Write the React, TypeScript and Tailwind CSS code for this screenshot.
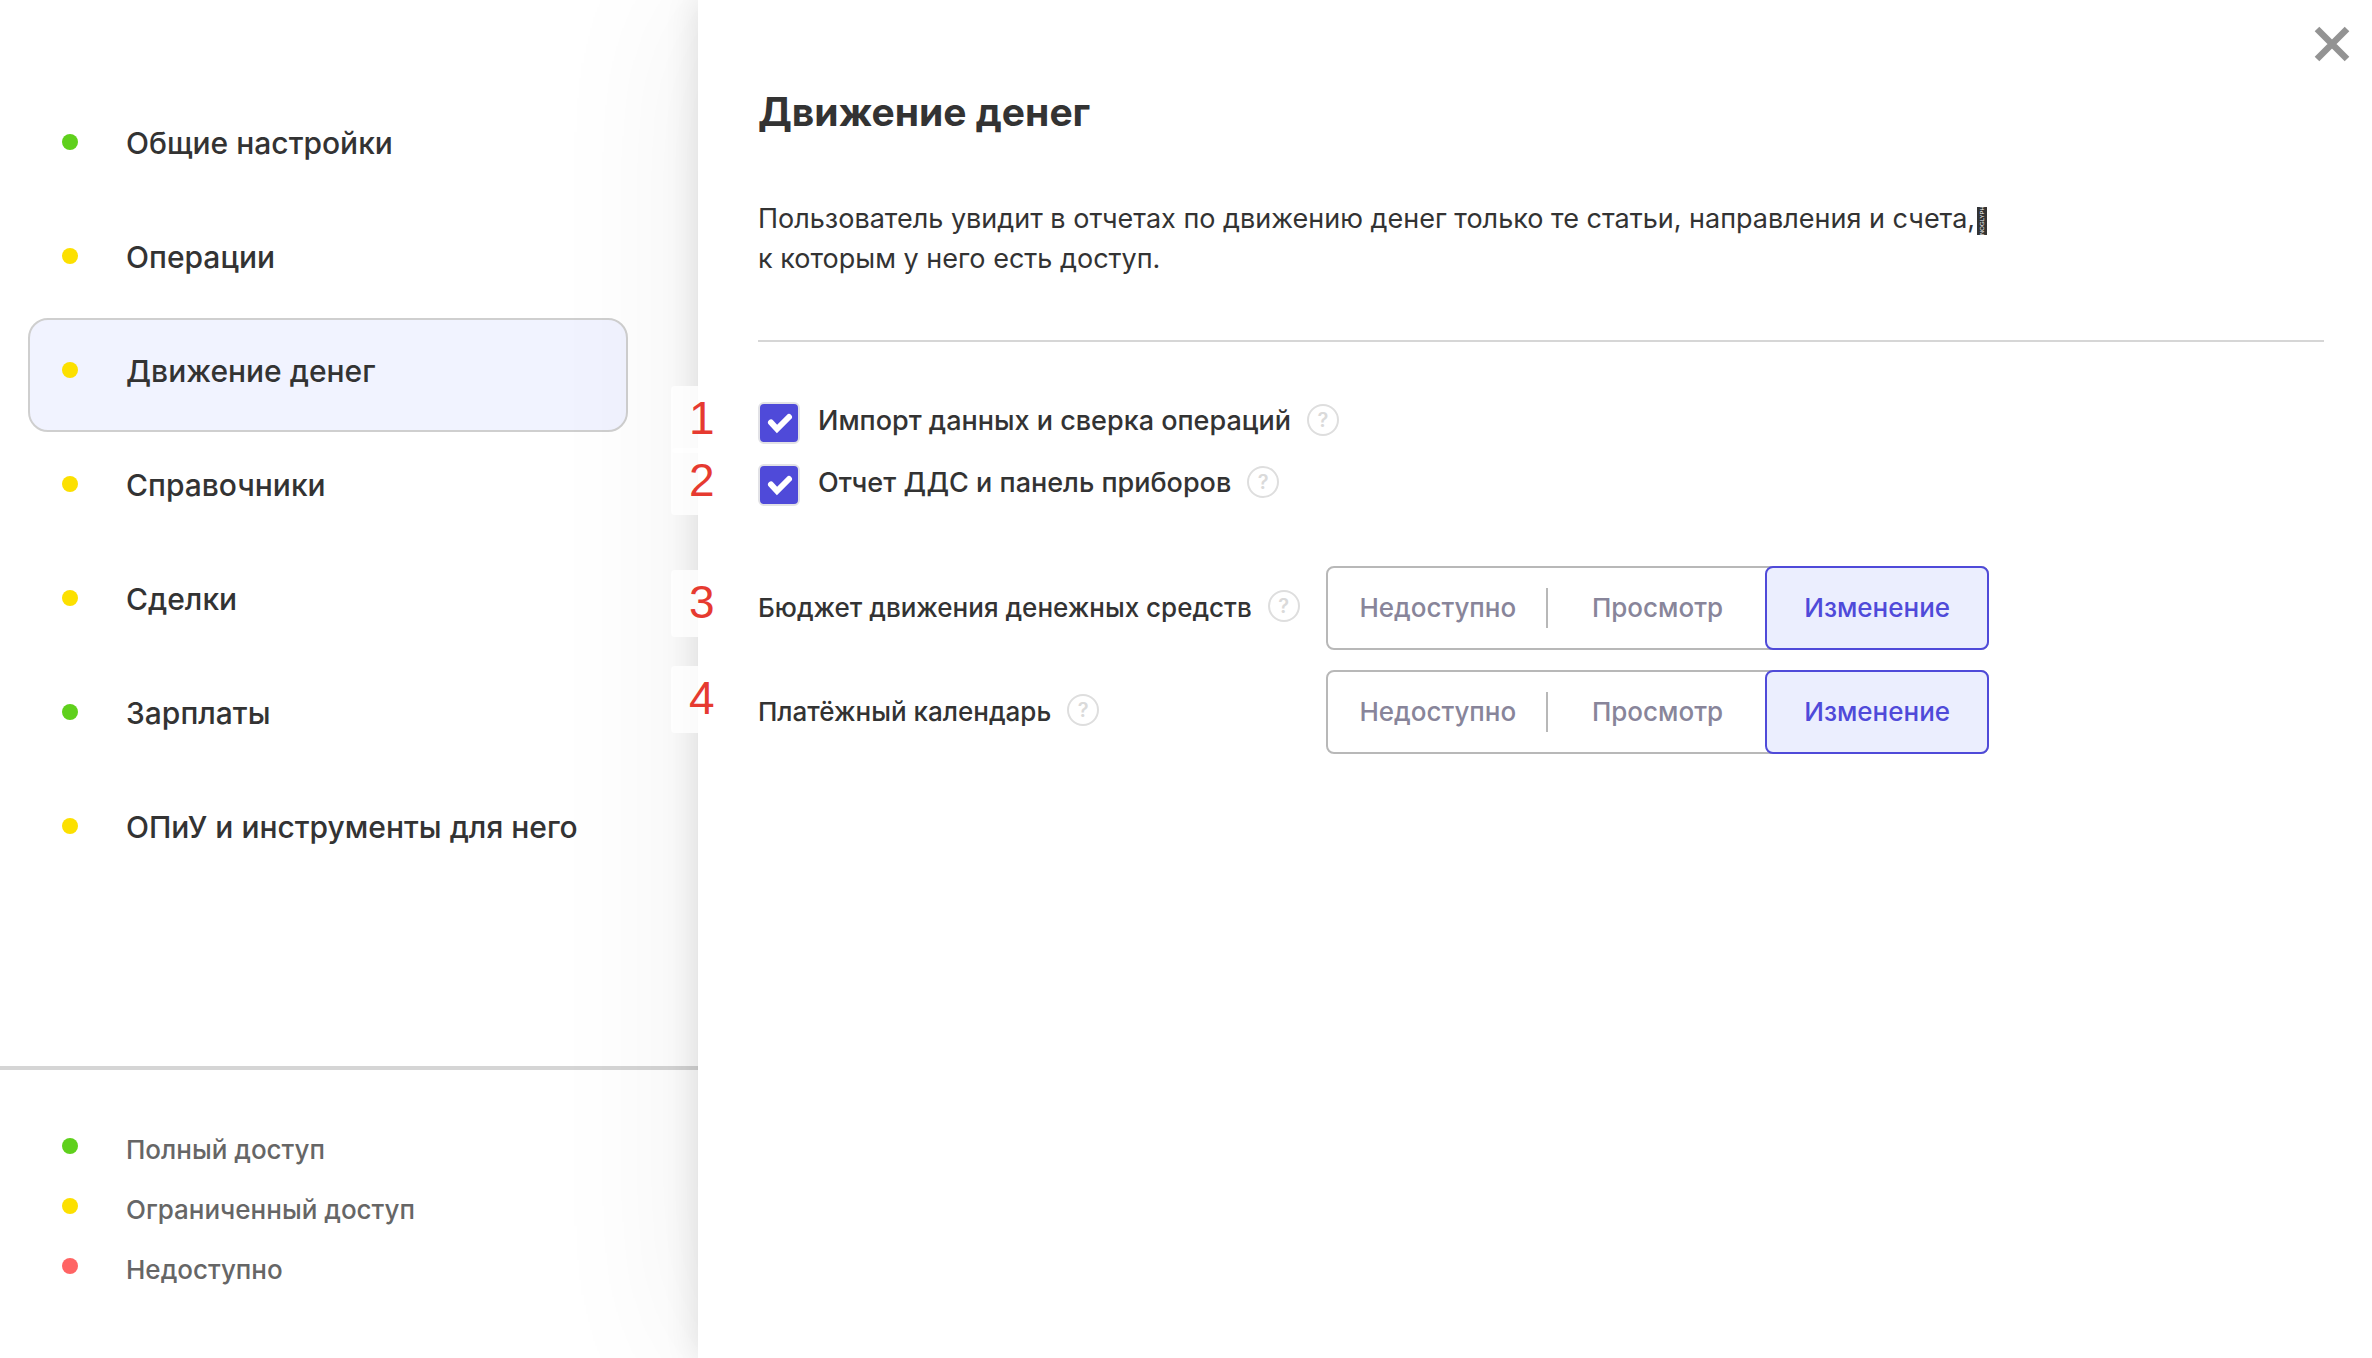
import { useState } from 'react'

type Access = 'full' | 'limited' | 'none'

const DOT: Record<Access, string> = {
  full: 'bg-[#5fd01c]',
  limited: 'bg-[#fce000]',
  none: 'bg-[#ff6464]',
}

const SECTIONS: { title: string; access: Access }[] = [
  { title: 'Общие настройки', access: 'full' },
  { title: 'Операции', access: 'limited' },
  { title: 'Движение денег', access: 'limited' },
  { title: 'Справочники', access: 'limited' },
  { title: 'Сделки', access: 'limited' },
  { title: 'Зарплаты', access: 'full' },
  { title: 'ОПиУ и инструменты для него', access: 'limited' },
]

const LEGEND: { title: string; access: Access }[] = [
  { title: 'Полный доступ', access: 'full' },
  { title: 'Ограниченный доступ', access: 'limited' },
  { title: 'Недоступно', access: 'none' },
]

const LEVELS = ['Недоступно', 'Просмотр', 'Изменение']

function Dot({ access }: { access: Access }) {
  return <span className={`size-4 shrink-0 rounded-full ${DOT[access]}`} />
}

function Help() {
  return (
    <button
      type="button"
      className="flex size-8 shrink-0 items-center justify-center rounded-full border-2 border-[#dedede] text-xl leading-none font-semibold text-[#dadada]"
    >
      ?
    </button>
  )
}

function Marker({ n, top }: { n: number; top: string }) {
  return (
    <span
      className={`absolute -left-[87px] flex h-[67px] w-14 items-center rounded-sm bg-white/80 pb-1 pl-[18px] font-['Liberation_Sans'] text-[46px] leading-none font-normal text-[#e63a30] ${top}`}
    >
      {n}
    </span>
  )
}

interface CheckRowProps { id: string; n: number; top: string; label: string }

function CheckRow({ id, n, top, label }: CheckRowProps) {
  const [checked, setChecked] = useState(true)

  return (
    <div className="relative flex h-[42px] items-center">
      <Marker n={n} top={top} />
      <span className="relative size-[42px] shrink-0">
        <input
          id={id}
          type="checkbox"
          checked={checked}
          onChange={(e) => setChecked(e.target.checked)}
          className="block size-full appearance-none rounded-md border-2 border-[#e2e2e6] bg-white checked:bg-[#4f4ad9]"
        />
        {checked && (
          <svg viewBox="0 0 42 42" className="pointer-events-none absolute inset-0 size-full" fill="none" stroke="white" strokeWidth="6" strokeLinecap="round">
            <path d="M13 20.5 19 27 31 15" strokeLinejoin="miter" />
          </svg>
        )}
      </span>
      <div className="flex items-center gap-4 pb-1.5 pl-[18px]">
        <label htmlFor={id} className="pt-0.5">{label}</label>
        <Help />
      </div>
    </div>
  )
}

interface LevelRowProps { name: string; n: number; top: string; label: string }

function LevelRow({ name, n, top, label }: LevelRowProps) {
  const [level, setLevel] = useState('Изменение')

  return (
    <div role="radiogroup" aria-labelledby={name} className="relative flex h-[84px] items-center text-[26px]">
      <Marker n={n} top={top} />
      <div className="flex w-[568px] shrink-0 items-center gap-4 pb-1">
        <span id={name} className="pt-0.5">{label}</span>
        <Help />
      </div>
      <div className="grid h-full w-[663px] grid-cols-3 rounded-lg border-2 border-[#b8b8b8]">
        {LEVELS.map((item, i) => (
          <label
            key={item}
            className={`relative flex items-center justify-center pb-0.5 ${
              level === item ? '-m-0.5 rounded-lg border-2 border-[#4f4ad9] bg-[#ebeefe] text-[#4f4ad9]' : 'text-[#88859a]'
            }`}
          >
            <input
              type="radio"
              name={name}
              value={item}
              checked={level === item}
              onChange={() => setLevel(item)}
              className="sr-only"
            />
            {item}
            {i < 2 && level !== item && level !== LEVELS[i + 1] && (
              <span className="absolute top-5 right-0 h-10 w-0.5 bg-[#b8b8b8]" />
            )}
          </label>
        ))}
      </div>
    </div>
  )
}

export default function App() {
  const [active, setActive] = useState('Движение денег')

  return (
    <div className="flex min-h-screen bg-white font-['Inter',sans-serif] text-[27px] font-medium text-[#333]">

      {/* Sections */}
      <aside className="flex w-[698px] shrink-0 flex-col">
        <nav className="flex flex-col pt-[90px] pr-[70px] pl-7 text-[30px]">
          {SECTIONS.map((s) => (
            <button
              key={s.title}
              type="button"
              onClick={() => setActive(s.title)}
              className={`flex h-[114px] items-center gap-12 rounded-[20px] border-2 pb-2.5 pl-8 text-left ${
                active === s.title ? 'border-[#cfcfcf] bg-[#f1f3ff]' : 'border-transparent'
              }`}
            >
              <Dot access={s.access} />
              <span className="pt-0.5">{s.title}</span>
            </button>
          ))}
        </nav>

        {/* Legend */}
        <ul className="mt-auto border-t-4 border-[#d5d5d5] pt-[46px] pb-[62px] pl-[62px] text-[26px] text-[#666]">
          {LEGEND.map((l) => (
            <li key={l.title} className="flex h-[60px] items-center gap-12">
              <Dot access={l.access} />
              <span className="pt-1.5">{l.title}</span>
            </li>
          ))}
        </ul>
      </aside>

      {/* Section settings */}
      <main className="relative flex-1 bg-white pt-[84px] pr-12 pl-[60px] shadow-[0_0_150px_rgba(0,0,0,0.07),0_0_32px_rgba(0,0,0,0.12)]">
        <button type="button" aria-label="Закрыть" className="absolute top-6 right-5 size-10">
          <svg viewBox="0 0 40 40" className="size-full" stroke="#939393" strokeWidth="6.5">
            <path d="M5 5 35 35M35 5 5 35" />
          </svg>
        </button>

        <h1 className="text-[39px] leading-[56px] font-bold">{active}</h1>

        <p className="mt-[59px] leading-10 font-normal">
          Пользователь увидит в отчетах по движению денег только те статьи, направления и счета,
          <span className="ml-0.5 inline-block h-7 w-2.5 rotate-180 overflow-hidden bg-[#333] align-middle font-['Liberation_Sans'] text-[6px] leading-[10px] text-white [writing-mode:vertical-rl]">
            NOGLYPH
          </span>
          <br />
          к которым у него есть доступ.
        </p>

        <hr className="mt-[61px] border-t-2 border-[#d6d6d6]" />

        <div className="mt-[60px] flex flex-col gap-5">
          <CheckRow id="import" n={1} top="-top-4" label="Импорт данных и сверка операций" />
          <CheckRow id="report" n={2} top="-top-4" label="Отчет ДДС и панель приборов" />
        </div>

        <div className="mt-[60px] flex flex-col gap-5">
          <LevelRow name="budget" n={3} top="top-1" label="Бюджет движения денежных средств" />
          <LevelRow name="calendar" n={4} top="-top-1" label="Платёжный календарь" />
        </div>
      </main>

    </div>
  )
}
